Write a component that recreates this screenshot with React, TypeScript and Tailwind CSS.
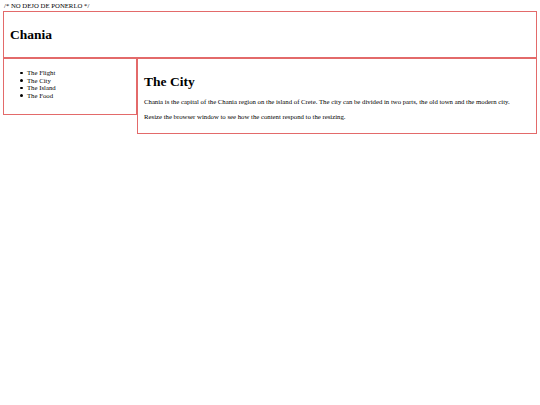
const menuItems = ['The Flight', 'The City', 'The Island', 'The Food'];

export default function App() {
  return (
    <div className="min-h-[405px] bg-white px-[3px] font-['Liberation_Serif',serif] text-[6.75px] leading-[7.5px] text-black">
      <p className="pt-[2px] pl-[1px] h-[11px]">/* NO DEJO DE PONERLO */</p>

      {/* cabecera */}
      <header className="flex h-[47px] items-center border border-[#e36a6a] px-[6px]">
        <h1 className="text-[13.5px] font-bold leading-[15.5px]">Chania</h1>
      </header>

      <div className="flex items-start">
        {/* menú lateral */}
        <nav className="w-[134px] h-[57px] shrink-0 border border-[#e36a6a] pt-[10px]">
          <ul className="pl-[16px]">
            {menuItems.map((item) => (
              <li key={item} className="flex items-center">
                <span className="mr-[4.5px] h-[2.5px] w-[2.5px] rounded-full bg-black" />
                {item}
              </li>
            ))}
          </ul>
        </nav>

        {/* contenido */}
        <main className="flex-1 border border-[#e36a6a] px-[6px] pt-[15px] pb-[12px]">
          <h1 className="text-[13.5px] font-bold leading-[15.5px]">The City</h1>
          <p className="mt-[8.5px]">
            Chania is the capital of the Chania region on the island of Crete. The city can be divided in two parts, the old town and the modern city.
          </p>
          <p className="mt-[7.5px]">
            Resize the browser window to see how the content respond to the resizing.
          </p>
        </main>
      </div>
    </div>
  );
}
